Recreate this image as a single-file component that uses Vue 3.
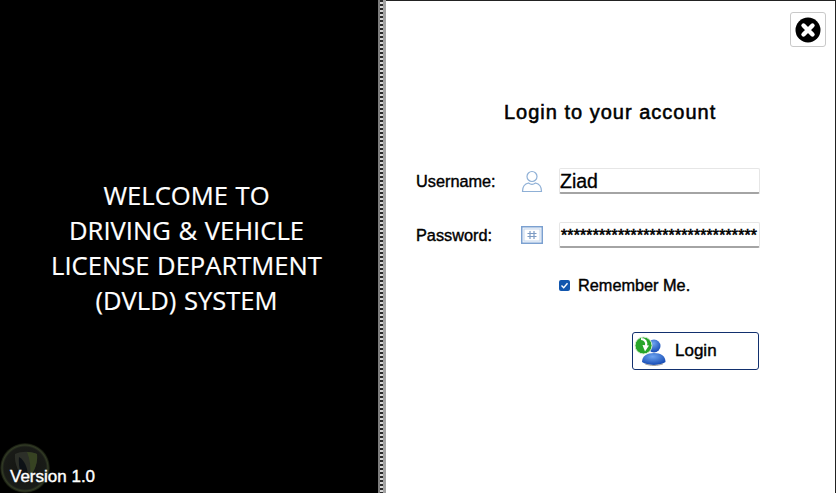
<script setup>
const title = ['WELCOME TO', 'DRIVING & VEHICLE', 'LICENSE DEPARTMENT', '(DVLD) SYSTEM']
const password = '*'.repeat(31)
</script>

<template>
  <div class="window">
    <aside class="left">
      <div class="welcome">
        <div v-for="line in title" :key="line" class="line">{{ line }}</div>
      </div>
      <svg class="logo" width="50" height="50" viewBox="0 0 50 50">
        <defs>
          <radialGradient id="glow" cx="50%" cy="50%" r="50%">
            <stop offset="0" stop-color="#131411" />
            <stop offset="0.84" stop-color="#191b17" />
            <stop offset="0.92" stop-color="#323b25" />
            <stop offset="1" stop-color="#0a0c06" />
          </radialGradient>
        </defs>
        <circle cx="25" cy="25" r="25" fill="url(#glow)" />
        <path d="M15 11 C21 8 31 8 37 11 C38 21 34 31 26 38 C19 31 14 21 15 11 Z" fill="#2c2f28" />
        <path d="M27 9 C31 9 35 10 37 11 C38 19 35 27 30 33 C31 24 30 16 27 9 Z" fill="#374322" />
        <path d="M19 14 C24 17 28 24 28 35 L26 38 C21 33 18 24 19 14 Z" fill="#0d1116" />
      </svg>
      <div class="version">Version 1.0</div>
    </aside>
    <div class="splitter"></div>
    <main class="right">
      <div class="close-row">
        <button class="close">
          <svg width="26" height="26" viewBox="0 0 26 26">
            <circle cx="13" cy="13" r="12.5" fill="#000" />
            <path d="M8.5 8.5 L17.5 17.5 M17.5 8.5 L8.5 17.5" stroke="#fff" stroke-width="4.400" stroke-linecap="round" />
          </svg>
        </button>
      </div>
      <h1>Login to your account</h1>
      <div class="form">
        <label>Username:</label>
        <svg class="ic" width="22" height="24" viewBox="0 0 22 24">
          <circle cx="11" cy="7.5" r="5" fill="#fff" stroke="#8fb0d6" stroke-width="1.2" />
          <path d="M1.5 22.5 C1.5 16.5 5 14.5 7.5 14 C9.5 15.5 12.5 15.5 14.5 14 C17 14.5 20.500 16.500 20.500 22.500 Z" fill="#fff" stroke="#8fb0d6" stroke-width="1.200" />
        </svg>
        <div class="input">Ziad</div>
        <label>Password:</label>
        <svg class="ic" width="22" height="18" viewBox="0 0 22 18">
          <rect x="0.75" y="0.75" width="20.5" height="16.5" fill="#f4f8fd" stroke="#7ba0d0" stroke-width="1.500" />
          <rect x="3" y="3" width="16" height="12" fill="#fff" stroke="#c5d6ec" />
          <path d="M9 5 V13 M13 5 V13 M6.500 7.500 H15.500 M6.500 10.500 H15.500" stroke="#7e9cc4" stroke-width="1.200" fill="none" />
        </svg>
        <div class="input pass">{{ password }}</div>
      </div>
      <div class="remember">
        <span class="check">
          <svg width="11" height="11" viewBox="0 0 11 11">
            <path d="M2.500 5.500 L4.700 7.700 L8.500 3.300" stroke="#fff" stroke-width="1.400" fill="none" />
          </svg>
        </span>
        <span>Remember Me.</span>
      </div>
      <div class="actions">
        <button class="login">
          <svg class="login-ic" width="32" height="30" viewBox="0 0 32 30">
            <defs>
              <radialGradient id="b" cx="45%" cy="30%" r="70%">
                <stop offset="0" stop-color="#6ea4f0" />
                <stop offset="1" stop-color="#154ab4" />
              </radialGradient>
            </defs>
            <circle cx="20" cy="10" r="6.500" fill="url(#b)" />
            <path d="M8 26 C8 20 13 17 20 17 C27 17 31.500 20 31.500 26 C26.500 30 13 30 8 26 Z" fill="url(#b)" />
            <path d="M11 27.800 C17 30 23 30 29 27.800" stroke="#9a9a9a" stroke-width="1" fill="none" />
            <circle cx="9.500" cy="9.500" r="8.500" fill="#27a52a" stroke="#d6efd0" stroke-width="1" />
            <path d="M7 3 C11 3 13 6 12 10" stroke="#fff" stroke-width="2.200" fill="none" />
            <path d="M8.500 9 L15 9.500 L11 15.500 Z" fill="#fff" />
          </svg>
          <span>Login</span>
        </button>
      </div>
    </main>
  </div>
</template>

<style scoped>
.window {
  display: flex;
  width: 836px;
  height: 493px;
  overflow: hidden;
  background: #fff;
  font-family: "Liberation Sans", Arial, sans-serif;
  color: #000;
}
.left {
  position: relative;
  width: 378px;
  flex: none;
  background: #000;
  color: #fff;
  display: flex;
  flex-direction: column;
  align-items: center;
}
.welcome {
  margin: 178px 0 0 -5px;
  width: 378px;
  text-align: center;
  font-family: "Open Sans", sans-serif;
  font-size: 25.6px;
  line-height: 35px;
  word-spacing: 1px;
  -webkit-text-stroke: 0.2px #fff;
}
.line { white-space: nowrap; }
.logo {
  position: absolute;
  left: 0;
  top: 443px;
}
.version {
  position: absolute;
  left: 10px;
  top: 468px;
  font-size: 17px;
  line-height: 18px;
  -webkit-text-stroke: 0.4px #fff;
}
.splitter {
  width: 8px;
  flex: none;
  box-sizing: border-box;
  background: repeating-linear-gradient(180deg, #2c2c2c 0 2px, #d4d4d4 2px 4px);
  border-left: 2px solid #7d7d7d;
  border-right: 3px solid #a2a2a2;
}
.right {
  flex: 1;
  box-sizing: border-box;
  border-top: 1px solid #222;
  border-right: 1px solid #222;
  display: flex;
  flex-direction: column;
}
.close-row {
  display: flex;
  justify-content: flex-end;
  padding: 11px 9px 0 0;
}
.close {
  width: 36px;
  height: 35px;
  padding: 0;
  background: #fff;
  border: 1px solid #c9c9c9;
  border-radius: 3px;
  display: flex;
  align-items: center;
  justify-content: center;
}
h1 {
  margin: 53px 0 0 118px;
  font-size: 20px;
  line-height: 24px;
  font-weight: 400;
  letter-spacing: 1px;
  -webkit-text-stroke: 0.55px #000;
  white-space: nowrap;
}
.form {
  margin: 44px 0 0 30px;
  display: grid;
  grid-template-rows: 26px 26px;
  row-gap: 28px;
  grid-template-columns: 105px 38px 201px;
  align-items: center;
  font-size: 16.3px;
}
label {
  -webkit-text-stroke: 0.4px #000;
}
.ic { justify-self: start; }
.input {
  height: 26px;
  box-sizing: border-box;
  padding-left: 0;
  border: 1px solid #e6e6e6;
  border-bottom: 2px solid #a4a4a4;
  border-radius: 2px;
  font-size: 19.500px;
  line-height: 24px;
  -webkit-text-stroke: 0.3px #000;
  overflow: hidden;
  white-space: nowrap;
}
.pass {
  font-size: 15.800px;
  line-height: 26px;
  padding-left: 1px;
  letter-spacing: 0.18px;
  -webkit-text-stroke: 0.6px #000;
}
.remember {
  margin: 28px 0 0 173px;
  display: flex;
  align-items: center;
  gap: 8px;
  font-size: 16.3px;
  line-height: 18px;
  -webkit-text-stroke: 0.4px #000;
}
.check {
  width: 11px;
  height: 11px;
  background: #1256ae;
  border-radius: 2px;
  display: flex;
}
.actions {
  margin: 38px 0 0 246px;
}
.login {
  width: 127px;
  height: 38px;
  box-sizing: border-box;
  padding: 0;
  background: #fff;
  border: 1.500px solid #12306e;
  border-radius: 3px;
  position: relative;
  display: flex;
  align-items: center;
  font-family: inherit;
  font-size: 17px;
  color: #000;
  -webkit-text-stroke: 0.4px #000;
}
.login-ic {
  position: absolute;
  left: 1px;
  top: 3px;
}
.login span {
  margin-left: 42px;
}
</style>

<style>
html, body { margin: 0; background: #fff; }
</style>
